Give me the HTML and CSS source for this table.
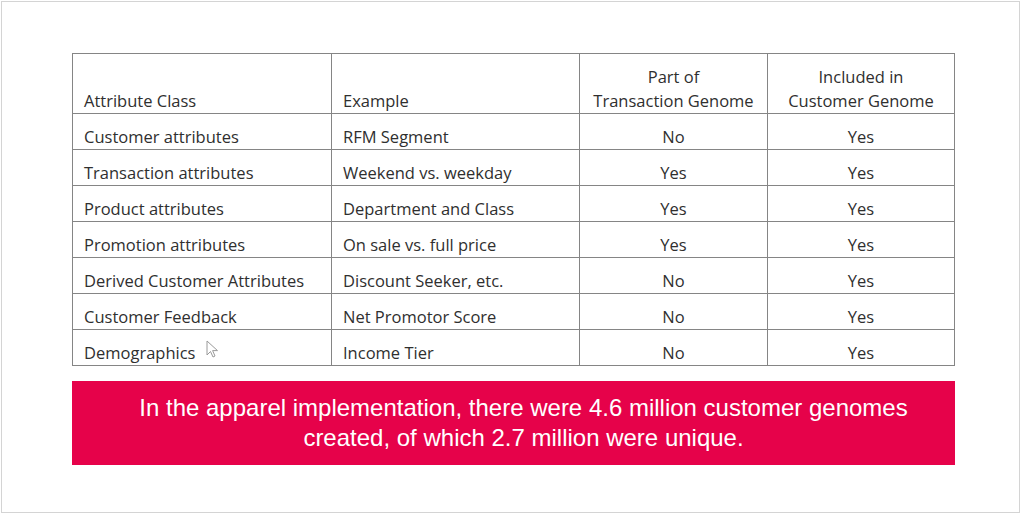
FILE: index.html
```html
<!DOCTYPE html>
<html>
<head>
<meta charset="utf-8">
<link rel="stylesheet" href="styles.css">
</head>
<body>
<div class="frame">
  <table class="genome">
    <thead>
      <tr>
        <th class="c1">Attribute Class</th>
        <th class="c2">Example</th>
        <th class="c3">Part of<br>Transaction Genome</th>
        <th class="c4">Included in<br>Customer Genome</th>
      </tr>
    </thead>
    <tbody>
      <tr><td>Customer attributes</td><td>RFM Segment</td><td class="mid">No</td><td class="mid">Yes</td></tr>
      <tr><td>Transaction attributes</td><td>Weekend vs. weekday</td><td class="mid">Yes</td><td class="mid">Yes</td></tr>
      <tr><td>Product attributes</td><td>Department and Class</td><td class="mid">Yes</td><td class="mid">Yes</td></tr>
      <tr><td>Promotion attributes</td><td>On sale vs. full price</td><td class="mid">Yes</td><td class="mid">Yes</td></tr>
      <tr><td>Derived Customer Attributes</td><td>Discount Seeker, etc.</td><td class="mid">No</td><td class="mid">Yes</td></tr>
      <tr><td>Customer Feedback</td><td>Net Promotor Score</td><td class="mid">No</td><td class="mid">Yes</td></tr>
      <tr><td class="demo">Demographics<svg class="cursor" width="14" height="20" viewBox="0 0 14 20"><path d="M1 1 L1 15 L4.5 11.5 L7 17 L9 16 L6.6 10.6 L11.5 10.6 Z" fill="#fff" stroke="#9a9a9a" stroke-width="1"/></svg></td><td>Income Tier</td><td class="mid">No</td><td class="mid">Yes</td></tr>
    </tbody>
  </table>
  <div class="callout">In the apparel implementation, there were 4.6 million customer genomes<br>created, of which 2.7 million were unique.</div>
</div>
</body>
</html>
```
FILE: styles.css
```css
html, body {
  margin: 0;
  padding: 0;
  background: #fff;
}
.frame {
  box-sizing: border-box;
  margin: 1px 0 0 1px;
  width: 1019px;
  height: 512px;
  border: 1px solid #d4d4d4;
  padding: 51px 0 0 70px;
}
.genome {
  border-collapse: collapse;
  font-family: "Open Sans", "Liberation Sans", sans-serif;
  font-size: 16.5px;
  color: #2f2f2f;
}
.genome th, .genome td {
  border: 1px solid #858585;
  padding: 0 11px;
  font-weight: normal;
  text-align: left;
  height: 35px;
  line-height: 24px;
  vertical-align: bottom;
  white-space: nowrap;
}
.genome th {
  height: 59px;
}
.genome .c1 { width: 236px; }
.genome .c2 { width: 225px; }
.genome .c3 { width: 187px; padding: 0; text-align: center; }
.genome .c4 { width: 186px; padding: 0; text-align: center; }
.genome td.mid { text-align: center; padding: 0; }
.demo { position: relative; }
.cursor {
  position: absolute;
  left: 133px;
  top: 10px;
}
.callout {
  margin-top: 15px;
  width: 883px;
  height: 84px;
  box-sizing: border-box;
  background: #e6024a;
  color: #fff;
  font-family: "Liberation Sans", Arial, sans-serif;
  font-size: 24px;
  line-height: 30px;
  text-align: center;
  padding: 12px 0 0 20px;
}
```
